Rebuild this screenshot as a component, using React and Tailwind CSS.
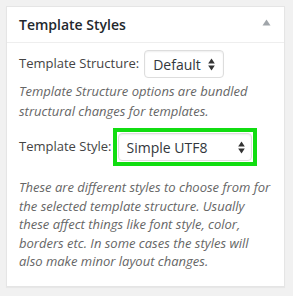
import { useState } from 'react'

function UpDown() {
  return (
    <svg width="7" height="13" viewBox="0 0 7 13" className="shrink-0">
      <path d="M3.5 0.5 L6.8 5.5 L0.2 5.5 Z" fill="#333" />
      <path d="M3.5 12.5 L6.8 7.5 L0.2 7.5 Z" fill="#333" />
    </svg>
  )
}

function Select({ value, className = '' }) {
  return (
    <div
      className={`flex items-center justify-between h-[28px] bg-white border border-[#dddddd] rounded-[4px] shadow-[inset_0_1px_2px_rgba(0,0,0,0.07)] pl-[8px] text-[14px] text-[#32373c] ${className}`}
    >
      <span>{value}</span>
      <UpDown />
    </div>
  )
}

export default function App() {
  const [open] = useState(true)
  const font = { fontFamily: '"Open Sans", sans-serif' }

  return (
    <div className="w-[293px] h-[296px] bg-[#f1f1f1] pt-[6px] pl-[6px]" style={font}>
      <div className="w-[279px] h-[281px] bg-white border border-[#e5e5e5] shadow-[0_1px_1px_rgba(0,0,0,0.04)]">
        <div className="flex items-center justify-between h-[36px] px-[12px] border-b border-[#eeeeee]">
          <h2 className="text-[14px] font-semibold text-[#23282d]">Template Styles</h2>
          <svg width="9" height="7" viewBox="0 0 9 7" className="mr-[1px] mt-[-4px]">
            <path d="M4.5 0.5 L8.5 6.5 L0.5 6.5 Z" fill="#a0a5aa" />
          </svg>
        </div>

        {open && (
          <div className="px-[12px] pt-[7px] text-[13px] text-[#444]">
            <div className="flex items-center">
              <span>Template Structure:</span>
              <Select value="Default" className="ml-[5px] w-[80px] pr-[8px]" />
            </div>
            <p className="italic text-[#666] leading-[20px] mt-[3px]">
              Template Structure options are bundled structural changes for templates.
            </p>

            <div className="flex items-center mt-[7px]">
              <span>Template Style:</span>
              <div className="border-[4px] border-[#11dd11] p-[1px] w-[144px] ml-[1px]">
                <Select value="Simple UTF8" className="pr-[6px]" />
              </div>
            </div>
            <p className="italic text-[#666] leading-[18.6px] mt-[12px]">
              These are different styles to choose from for the selected template structure. Usually these affect things like font style, color, borders etc. In some cases the styles will also make minor layout changes.
            </p>
          </div>
        )}
      </div>
    </div>
  )
}
